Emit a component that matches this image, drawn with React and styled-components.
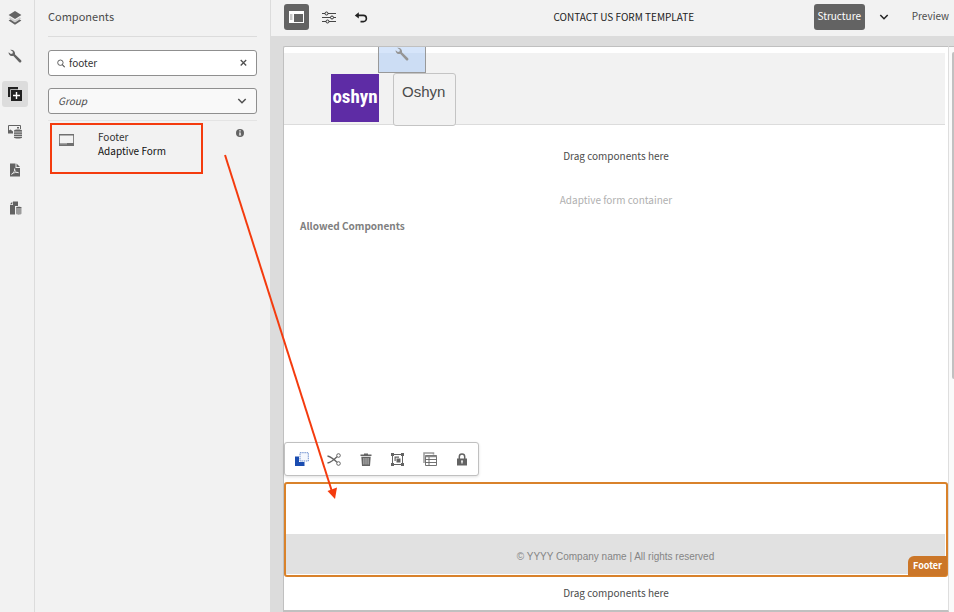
import React, { useState } from 'react';
import styled, { createGlobalStyle, css } from 'styled-components';

const colors = {
  panel: '#f2f2f2',
  canvas: '#dcdcdc',
  line: '#dcdcdc',
  dark: '#636363',
  icon: '#636363',
  text: '#4b4b4b',
  heading: '#323232',
  orange: '#d9822b',
  badge: '#cb7628',
  red: '#f43b0e',
};

const fonts = {
  ui: `'Noto Sans CJK SC', 'Open Sans', sans-serif`,
  content: `'Liberation Sans', Arial, sans-serif`,
  logo: `'Roboto Condensed', 'Liberation Sans Narrow', 'DejaVu Sans Condensed', sans-serif`,
};

const GlobalStyle = createGlobalStyle`
  * {
    box-sizing: border-box;
  }

  body {
    margin: 0;
    background-color: ${colors.panel};
    color: ${colors.text};
    font-family: ${fonts.ui};
    font-size: 10px;
    line-height: 14px;
  }

  button,
  input,
  select {
    font: inherit;
    color: inherit;
  }

  button {
    padding: 0;
    border: 0;
    background: none;
    cursor: pointer;
  }

  svg {
    display: block;
  }
`;

const Editor = styled.div`
  position: relative;
  display: flex;
  min-height: 100vh;
`;

const Rail = styled.nav`
  display: flex;
  flex: none;
  flex-direction: column;
  align-items: center;
  gap: 12px;
  width: 35px;
  padding: 5px 4px 4px 0;
  border-right: 1px solid ${colors.line};
`;

const RailButton = styled.button`
  display: grid;
  place-items: center;
  width: 26px;
  height: 26px;
  border-radius: 3px;
  color: ${colors.icon};
  ${({ $active }) =>
    $active &&
    css`
      background-color: #dcdcdc;
      color: #222;
    `}
`;

const SidePanel = styled.aside`
  flex: none;
  width: 236px;
  padding: 0 13px;
  border-right: 1px solid ${colors.line};
`;

const PanelTitle = styled.h1`
  height: 37px;
  margin: 0 0 13px;
  border-bottom: 1px solid ${colors.line};
  font-size: 11px;
  font-weight: 400;
  line-height: 32px;
`;

const Field = styled.div`
  display: flex;
  align-items: center;
  gap: 4px;
  height: 26px;
  margin-bottom: 12px;
  padding: 0 9px 0 8px;
  border: 1px solid #8f8f8f;
  border-radius: 3px;
  background-color: ${({ $muted }) => ($muted ? '#f9f9f9' : '#fff')};
  color: ${colors.heading};
`;

const SearchInput = styled.input`
  flex: 1;
  min-width: 0;
  height: 20px;
  padding: 0 0 2px;
  border: 0;
  outline: 0;
  background: none;
`;

const GroupSelect = styled.select`
  flex: 1;
  height: 20px;
  padding: 0 1px;
  border: 0;
  outline: 0;
  appearance: none;
  background: none;
  color: ${colors.text};
  font-style: italic;
`;

const ComponentList = styled.ul`
  margin: -6px 0 0;
  padding: 2px 0 0 2px;
  border-top: 1px solid #e4e4e4;
  list-style: none;
`;

const ComponentItem = styled.li`
  display: flex;
  justify-content: space-between;
`;

const ComponentCard = styled.div`
  display: flex;
  gap: 24px;
  width: 153px;
  height: 51px;
  padding: 5px 7px;
  border: 2px solid ${colors.red};
  color: ${colors.heading};

  svg {
    margin-top: 4px;
  }
`;

const CardName = styled.div``;

const CardGroup = styled.div`
  color: #111;
`;

const InfoButton = styled.button`
  align-self: flex-start;
  margin: 6px 13px 0 0;
`;

const Main = styled.main`
  display: flex;
  flex: 1;
  flex-direction: column;
  min-width: 0;
`;

const TopBar = styled.header`
  display: flex;
  align-items: center;
  height: 36px;
  padding: 0 5px 2px 13px;
`;

const Tools = styled.div`
  display: flex;
  align-items: center;
  gap: 7px;
  width: 150px;
`;

const ToolButton = styled.button`
  display: grid;
  place-items: center;
  width: 25px;
  height: 26px;
  border-radius: 3px;
  color: #323232;
  ${({ $active }) =>
    $active &&
    css`
      background-color: ${colors.dark};
      color: #fff;
    `}
`;

const TemplateTitle = styled.h2`
  flex: 1;
  margin: 0;
  color: #222;
  font-size: 10px;
  font-weight: 400;
  text-align: center;
`;

const Modes = styled.div`
  display: flex;
  align-items: center;
`;

const ModeButton = styled.button`
  height: 26px;
  padding-bottom: 2px;
  ${({ $active }) =>
    $active &&
    css`
      width: 51px;
      border-radius: 3px;
      background-color: ${colors.dark};
      color: #fff;
    `}
`;

const ModeToggle = styled.button`
  margin: 0 23px 0 14px;
`;

const Canvas = styled.div`
  display: flex;
  flex: 1;
  padding: 10px 0 0 12px;
  background-color: ${colors.canvas};
`;

const Page = styled.div`
  display: flex;
  flex: 1;
  flex-direction: column;
  border: 1px solid #c0c0c0;
  border-right-color: #dedede;
  border-bottom-width: 2px;
  border-radius: 2px 0 0 0;
  background-color: #fff;
`;

const ScrollTrack = styled.div`
  width: 5px;
  padding: 5px 0 0 3px;
  border-top: 1px solid #c0c0c0;
  background-color: #fafafa;
`;

const ScrollThumb = styled.div`
  height: 327px;
  border-radius: 3px 0 0 3px;
  background-color: #c1c1c1;
`;

const PageHeader = styled.div`
  position: relative;
  display: flex;
  gap: 14px;
  height: 72px;
  margin: 6px 3px 0 0;
  padding: 20px 0 0 47px;
  border-bottom: 1px solid #dcdcdc;
  background-color: ${colors.panel};
`;

const LayoutHandle = styled.button`
  position: absolute;
  top: -6px;
  left: 94px;
  display: flex;
  justify-content: center;
  width: 48px;
  height: 26px;
  border: 1px solid #999;
  border-top: 0;
  background: linear-gradient(#d6e5fa 6px, #ccddf4 6px);
  color: #959595;
`;

const Logo = styled.div`
  width: 48px;
  height: 48px;
  margin-top: 1px;
  background-color: #5e2ca5;
  color: #fff;
  font-family: ${fonts.logo};
  font-size: 19px;
  font-weight: 700;
  line-height: 45px;
  text-align: center;
`;

const BrandTitle = styled.div`
  width: 63px;
  height: 53px;
  padding: 7px 8px;
  border: 1px solid #c4c4c4;
  border-radius: 3px;
  background-color: ${colors.panel};
  color: ${colors.text};
  font-family: ${fonts.content};
  font-size: 15px;
  line-height: 21px;
`;

const DropZone = styled.div`
  padding: ${({ $tall }) => ($tall ? '24px 0 30px' : '9px 0 10px')};
  text-align: center;
`;

const FormContainer = styled.section`
  flex: 1;
  padding: 0 16px;
`;

const ContainerLabel = styled.div`
  margin-bottom: 12px;
  color: #b0b0b0;
  text-align: center;
`;

const AllowedTitle = styled.h3`
  margin: 0;
  color: #808080;
  font-size: 10px;
  font-weight: 700;
`;

const ActionBar = styled.div`
  display: flex;
  align-items: center;
  align-self: flex-start;
  gap: 5px;
  height: 34px;
  margin-bottom: 6px;
  padding: 0 3px;
  border: 1px solid #c0c0c0;
  border-radius: 3px;
  background-color: #fff;
  box-shadow: 0 1px 3px rgba(0, 0, 0, 0.12);
`;

const ActionButton = styled.button`
  display: grid;
  place-items: center;
  width: 27px;
  height: 28px;
  color: ${colors.icon};
`;

const FooterSlot = styled.footer`
  position: relative;
  height: 95px;
  padding: 50px 1px 1px 0;
  border: 2px solid ${colors.orange};
  border-radius: 3px;
`;

const FooterText = styled.p`
  height: 40px;
  margin: 0;
  background-color: #e1e1e1;
  color: #858585;
  font-family: ${fonts.content};
  font-size: 10px;
  line-height: 45px;
  text-align: center;
`;

const FooterBadge = styled.span`
  position: absolute;
  right: -1px;
  bottom: -1px;
  padding: 3px 5px;
  border-radius: 6px 0 2px 0;
  background-color: ${colors.badge};
  color: #fff;
  font-size: 9px;
  font-weight: 700;
`;

const Arrow = styled.svg`
  position: absolute;
  top: 154px;
  left: 222px;
  pointer-events: none;
`;

const IconLayers = () => (
  <svg width="14" height="14" viewBox="0 0 14 14" fill="currentColor">
    <path d="M7 0 13.4 4 7 8 .6 4z" />
    <path d="M2.2 6.2.6 7.2 7 11.2l6.4-4-1.6-1L7 9.2z" opacity=".25" />
    <path d="M2.4 8.4.6 9.5 7 13.8l6.4-4.3-1.8-1.1L7 11.4z" />
  </svg>
);

const IconWrench = ({ size = 14 }) => (
  <svg width={size} height={size} viewBox="0 0 14 14">
    <path
      d="M2.2.7 4.9 2.8 4.6 4.6 2.9 5 .6 3.2C.4 5.1 1.6 7 3.8 7.1c.6 0 1-.1 1.4-.3l6 6.4c1.2 1 2.9-.6 1.9-1.9L6.9 5.2c.7-2.6-1.7-5-4.7-4.5z"
      fill="currentColor"
    />
  </svg>
);

const IconAddComponent = () => (
  <svg width="14" height="14" viewBox="0 0 14 14" fill="currentColor">
    <path d="M0 0h10v2.2H2.2V10H0z" />
    <path d="M3 3h11v11H3z" />
    <path d="M8.5 5v7M5 8.5h7" stroke="#fff" strokeWidth="1.4" />
  </svg>
);

const IconAssets = () => (
  <svg width="15" height="14" viewBox="0 0 15 14" fill="currentColor">
    <path d="M.5 8V.5h12V4" fill="none" stroke="currentColor" />
    <path d="M0 8.5V6l2.500-1.500L5 6.500v2zM9 2h2v1.500H9z" />
    <path d="M6 5.500c0-1.200 8-1.200 8 0v7c0 1.400-8 1.400-8 0z" />
    <path d="M5.500 7h9M5.500 9.300h9M5.500 11.500h9" stroke="#f2f2f2" strokeWidth=".7" />
  </svg>
);

const IconPdf = () => (
  <svg width="12" height="14" viewBox="0 0 12 14" fill="currentColor">
    <path d="M1 .5h5.500V5H11v8.500H1z" />
    <path d="M7.500.5 11 4H7.500z" />
    <path
      d="M2.500 11.300c2-1 3.700-4.200 3.200-5.600-.9-.3.4 4.300 3.800 4-1.500-.8-4.800-.2-7 1.600z"
      fill="none"
      stroke="#f2f2f2"
      strokeWidth=".8"
    />
  </svg>
);

const IconContent = () => (
  <svg width="14" height="14" viewBox="0 0 14 14" fill="currentColor">
    <path d="M5 .5h5V5H7v8.500H2V4h3z" />
    <path d="M2 3.200 4.300.800v2.400z" />
    <path d="M8 6.500c0-1 5.500-1 5.500 0v6c0 1.200-5.500 1.200-5.500 0z" />
    <path d="M7.500 8h6.500M7.500 10h6.500M7.500 12h6.500" stroke="#f2f2f2" strokeWidth=".8" />
  </svg>
);

const IconSearch = () => (
  <svg width="8" height="9" viewBox="0 0 8 9" fill="none" stroke="#505050">
    <circle cx="3.4" cy="3.7" r="2.7" strokeWidth=".9" />
    <path d="m5.3 5.7 2.400 2.500" strokeWidth="1.100" />
  </svg>
);

const IconClose = () => (
  <svg width="7" height="8" viewBox="0 0 7 8" stroke="#505050" strokeWidth="1.300">
    <path d="m.7 1 5.500 5.500M6.200 1 .7 6.500" />
  </svg>
);

const IconChevron = ({ color = '#505050' }) => (
  <svg width="10" height="6" viewBox="0 0 10 6" fill="none" stroke={color} strokeWidth="1.500">
    <path d="m1.300 1 3.700 3.700L8.700 1" />
  </svg>
);

const IconFooter = () => (
  <svg width="15" height="12" viewBox="0 0 15 12" fill="#707070">
    <path d="M.5.5h14v11H.5z" fill="none" stroke="#858585" />
    <path d="M0 0h15v1.500H0zM0 9h15v3H0z" />
    <path d="M1 9.300h7v1H1z" fill="#bbb" />
  </svg>
);

const IconInfo = () => (
  <svg width="8" height="8" viewBox="0 0 8 8">
    <circle cx="4" cy="4" r="4" fill="#636363" />
    <path d="M3.200 1.300h1.600v1.300H3.200zM3 3.400h1.800v2.300h.4v.9H2.900v-.9h.4V4.300H3z" fill="#e8e8e8" />
  </svg>
);

const IconSidePanel = () => (
  <svg width="15" height="12" viewBox="0 0 15 12">
    <path d="M0 0h15v12H0z" fill="#fff" />
    <path d="M5 3h9v8H5z" fill="#636363" />
    <path d="M1 4h2.500M1 6h2.500M1 8h2.500" stroke="#777" strokeWidth=".8" />
  </svg>
);

const IconSliders = () => (
  <svg width="14" height="13" viewBox="0 0 14 13" fill="#f2f2f2" stroke="currentColor">
    <path d="M0 2.500h14M0 6.500h14M0 10.500h14" strokeWidth=".9" />
    <circle cx="4.500" cy="2.500" r="1.500" />
    <circle cx="10" cy="6.500" r="1.500" />
    <circle cx="5.500" cy="10.500" r="1.500" />
  </svg>
);

const IconUndo = () => (
  <svg width="14" height="11" viewBox="0 0 14 11">
    <path d="M3 3.400h6.300a3.100 3.100 0 0 1 0 6.200H6.500" fill="none" stroke="#222" strokeWidth="1.600" />
    <path d="M.8 3.400 4.800.200v6.400z" fill="#222" />
  </svg>
);

const IconParent = () => (
  <svg width="14" height="14" viewBox="0 0 14 14">
    <path d="M0 4.500h4V10h5.500v4H0z" fill="#1a4cb0" />
    <path d="M5 .7h8.300V9H5z" fill="#f4f7fd" stroke="#6d8fcf" strokeDasharray="1.500 .7" />
  </svg>
);

const IconCut = () => (
  <svg width="14" height="13" viewBox="0 0 14 13" fill="none" stroke="currentColor">
    <circle cx="11.500" cy="2.500" r="1.800" />
    <circle cx="11.500" cy="10.500" r="1.800" />
    <path d="M.5 3c3 .7 7 3.800 9.500 6.300M.5 10c3-.7 7-3.800 9.500-6.300" strokeWidth="1.300" />
  </svg>
);

const IconTrash = () => (
  <svg width="12" height="13" viewBox="0 0 12 13" fill="currentColor">
    <path d="M4 1.500V.5h4v1h3.500V3H.5V1.500zM1.300 3.700h9.400L10 13H2z" />
    <path d="M3.900 5v6.500M6 5v6.500M8.100 5v6.500" stroke="#d8d8d8" strokeWidth=".8" />
  </svg>
);

const IconGroup = () => (
  <svg width="13" height="13" viewBox="0 0 13 13" fill="currentColor">
    <path d="M1.500 1.500h10v10h-10z" fill="none" stroke="currentColor" />
    <path d="M0 0h3v3H0zM10 0h3v3h-3zM0 10h3v3H0zM10 10h3v3h-3z" />
    <path d="M3.500 3.500h4.500v1.200H4.700V8H3.500zM5.500 5.500h4v4h-4z" />
  </svg>
);

const IconTable = () => (
  <svg width="14" height="14" viewBox="0 0 14 14" fill="none" stroke="currentColor">
    <path d="M1 11V1h9.500v1.500" stroke="#999" strokeWidth="1.500" />
    <path d="M2.500 3.500h11v10h-11z" fill="#fff" strokeWidth=".9" />
    <path d="M2.500 4.500h11" stroke="#888" strokeWidth="1.500" />
    <path d="M2.500 7.500h11M2.500 10.500h11M6 5v8.500" strokeWidth=".9" />
  </svg>
);

const IconLock = () => (
  <svg width="10" height="13" viewBox="0 0 10 13">
    <path d="M2.300 6V3.800a2.700 2.700 0 0 1 5.400 0V6" fill="none" stroke="currentColor" strokeWidth="1.500" />
    <path d="M0 5.500h10V12.500H0z" fill="currentColor" />
    <path d="M5 7.500v3M4 8h2" stroke="#fff" strokeWidth="1.200" />
  </svg>
);

const railItems = [
  { label: 'Layers', Icon: IconLayers },
  { label: 'Properties', Icon: IconWrench },
  { label: 'Components', Icon: IconAddComponent, active: true },
  { label: 'Assets', Icon: IconAssets },
  { label: 'Documents', Icon: IconPdf },
  { label: 'Data sources', Icon: IconContent },
];

const actions = [
  { label: 'Parent', Icon: IconParent },
  { label: 'Cut', Icon: IconCut },
  { label: 'Delete', Icon: IconTrash },
  { label: 'Group', Icon: IconGroup },
  { label: 'Policy', Icon: IconTable },
  { label: 'Lock', Icon: IconLock },
];

const ComponentsPanel = () => {
  const [query, setQuery] = useState('footer');

  return (
    <SidePanel>
      <PanelTitle>Components</PanelTitle>
      <Field>
        <IconSearch />
        <SearchInput
          type="text"
          aria-label="Filter components"
          value={query}
          onChange={e => setQuery(e.target.value)}
        />
        <button type="button" aria-label="Clear" onClick={() => setQuery('')}>
          <IconClose />
        </button>
      </Field>
      <Field $muted>
        <GroupSelect aria-label="Group">
          <option>Group</option>
        </GroupSelect>
        <IconChevron />
      </Field>
      <ComponentList>
        <ComponentItem>
          <ComponentCard>
            <IconFooter />
            <div>
              <CardName>Footer</CardName>
              <CardGroup>Adaptive Form</CardGroup>
            </div>
          </ComponentCard>
          <InfoButton type="button" aria-label="Info">
            <IconInfo />
          </InfoButton>
        </ComponentItem>
      </ComponentList>
    </SidePanel>
  );
};

const App = () => (
  <>
    <GlobalStyle />
    <Editor>
      <Rail>
        {railItems.map(({ label, Icon, active }) => (
          <RailButton key={label} type="button" aria-label={label} $active={active}>
            <Icon />
          </RailButton>
        ))}
      </Rail>

      <ComponentsPanel />

      <Main>
        <TopBar>
          <Tools>
            <ToolButton type="button" aria-label="Toggle side panel" $active>
              <IconSidePanel />
            </ToolButton>
            <ToolButton type="button" aria-label="Page information">
              <IconSliders />
            </ToolButton>
            <ToolButton type="button" aria-label="Undo">
              <IconUndo />
            </ToolButton>
          </Tools>
          <TemplateTitle>CONTACT US FORM TEMPLATE</TemplateTitle>
          <Modes>
            <ModeButton type="button" $active>
              Structure
            </ModeButton>
            <ModeToggle type="button" aria-label="Select mode">
              <IconChevron color="#222" />
            </ModeToggle>
            <ModeButton type="button">Preview</ModeButton>
          </Modes>
        </TopBar>

        <Canvas>
          <Page>
            <PageHeader>
              <Logo>oshyn</Logo>
              <BrandTitle>Oshyn</BrandTitle>
              <LayoutHandle type="button" aria-label="Configure">
                <IconWrench />
              </LayoutHandle>
            </PageHeader>
            <DropZone $tall>Drag components here</DropZone>
            <FormContainer>
              <ContainerLabel>Adaptive form container</ContainerLabel>
              <AllowedTitle>Allowed Components</AllowedTitle>
            </FormContainer>
            <ActionBar>
              {actions.map(({ label, Icon }) => (
                <ActionButton key={label} type="button" aria-label={label}>
                  <Icon />
                </ActionButton>
              ))}
            </ActionBar>
            <FooterSlot>
              <FooterText>© YYYY Company name | All rights reserved</FooterText>
              <FooterBadge>Footer</FooterBadge>
            </FooterSlot>
            <DropZone>Drag components here</DropZone>
          </Page>
          <ScrollTrack>
            <ScrollThumb />
          </ScrollTrack>
        </Canvas>
      </Main>

      <Arrow width="118" height="348" viewBox="0 0 118 348">
        <path d="M3 1 109.500 336" stroke={colors.red} strokeWidth="2" />
        <path d="m105.500 337 9.500-3.500-2 11.500z" fill={colors.red} />
      </Arrow>
    </Editor>
  </>
);

export default App;
